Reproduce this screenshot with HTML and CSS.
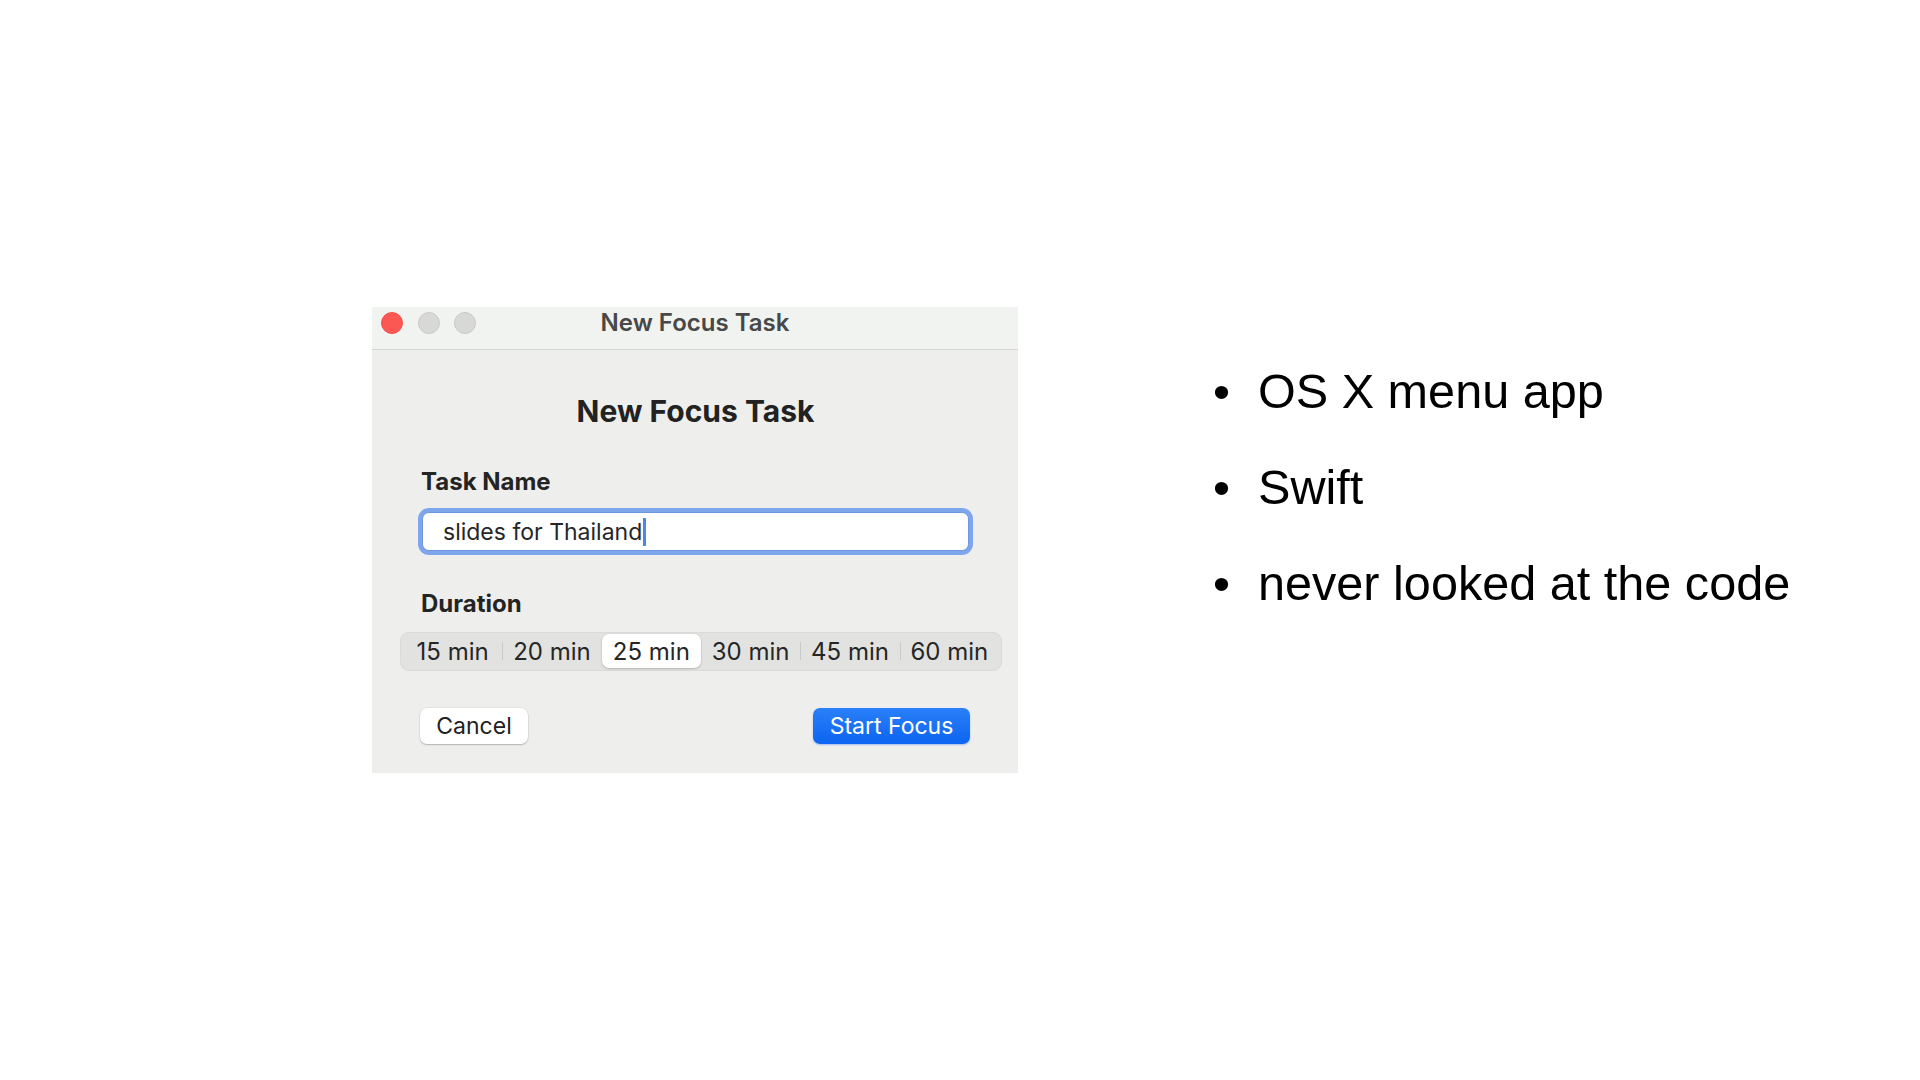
FILE: index.html
```html
<!DOCTYPE html>
<html lang="en">
<head>
<meta charset="utf-8">
<title>New Focus Task</title>
<link rel="stylesheet" href="styles.css">
</head>
<body>
<main class="slide">
  <section class="window">
    <header class="titlebar">
      <div class="lights">
        <span class="light red"></span>
        <span class="light"></span>
        <span class="light"></span>
      </div>
      <div class="title">New Focus Task</div>
      <div></div>
    </header>
    <div class="content">
      <h1 class="heading">New Focus Task</h1>
      <div class="label">Task Name</div>
      <div class="input-ring">
        <div class="input"><span class="input-text">slides for Thailand</span><span class="caret"></span></div>
      </div>
      <div class="label label-duration">Duration</div>
      <div class="segmented">
        <div class="seg">15 min</div>
        <div class="seg">20 min</div>
        <div class="seg selected">25 min</div>
        <div class="seg after-selected">30 min</div>
        <div class="seg">45 min</div>
        <div class="seg">60 min</div>
      </div>
      <div class="actions">
        <button class="btn">Cancel</button>
        <button class="btn primary">Start Focus</button>
      </div>
    </div>
  </section>
  <ul class="bullets">
    <li><span class="dot">•</span><span>OS X menu app</span></li>
    <li><span class="dot">•</span><span>Swift</span></li>
    <li><span class="dot">•</span><span>never looked at the code</span></li>
  </ul>
</main>
</body>
</html>
```

FILE: styles.css
```css
html, body {
  margin: 0;
  padding: 0;
  background: #ffffff;
}

.slide {
  width: 1920px;
  height: 1080px;
  box-sizing: border-box;
  display: flex;
  align-items: flex-start;
  padding: 307px 0 0 372px;
}

/* ---------- window ---------- */
.window {
  width: 646px;
  height: 466px;
  background: #eeefed;
  font-family: Inter, "Noto Sans", sans-serif;
  color: #242424;
  display: flex;
  flex-direction: column;
  flex-shrink: 0;
}

.titlebar {
  height: 43px;
  box-sizing: border-box;
  padding-top: 5px;
  background: #f1f3f0;
  border-bottom: 1px solid #d5d6d4;
  display: grid;
  grid-template-columns: 1fr auto 1fr;
  align-items: start;
}

.lights {
  display: flex;
  gap: 14.5px;
  padding-left: 9px;
}

.light {
  width: 22px;
  height: 22px;
  border-radius: 50%;
  box-sizing: border-box;
  background: #d8d9d7;
  border: 1px solid #c9cac8;
}

.light.red {
  background: #fc5853;
  border-color: #f24e4a;
}

.title {
  font-size: 24px;
  line-height: 22px;
  font-weight: 600;
  color: #474847;
}

.content {
  flex: 1;
  display: flex;
  flex-direction: column;
  padding: 43px 45px 0 46px;
}

.heading {
  margin: 0;
  font-size: 30px;
  line-height: 36px;
  font-weight: 700;
  text-align: center;
  color: #222;
}

.label {
  margin-top: 39px;
  padding-left: 3px;
  font-size: 24px;
  line-height: 28px;
  font-weight: 700;
  color: #242424;
}

.label-duration {
  margin-top: 35px;
}

.input-ring {
  margin-top: 12px;
  height: 47px;
  box-sizing: border-box;
  padding: 4px;
  border-radius: 11px;
  background: #7ea6ec;
}

.input {
  height: 100%;
  box-sizing: border-box;
  background: #ffffff;
  border-radius: 7px;
  border: 1px solid #6e97e2;
  padding-left: 20px;
  display: flex;
  align-items: center;
  font-size: 23px;
  color: #262626;
}

.caret {
  display: inline-block;
  width: 3px;
  height: 28px;
  background: #4f86e4;
  margin-left: 1px;
}

.segmented {
  margin: 14px -29px 0 -18px;
  height: 39px;
  box-sizing: border-box;
  padding: 1px 2px 2px;
  border-radius: 9px;
  background: #e2e3e1;
  border: 1px solid #dadbd9;
  display: flex;
}

.seg {
  flex: 1;
  position: relative;
  display: flex;
  align-items: center;
  justify-content: center;
  font-size: 24px;
  color: #262626;
  border-radius: 7px;
}

.seg + .seg::before {
  content: "";
  position: absolute;
  left: 0;
  top: 8px;
  bottom: 8px;
  width: 1px;
  background: #c9cac8;
}

.seg.selected {
  background: #ffffff;
  box-shadow: 0 1px 2px rgba(0, 0, 0, 0.18), 0 0 0 0.5px rgba(0, 0, 0, 0.06);
}

.seg.selected::before,
.seg.after-selected::before {
  display: none;
}

.actions {
  margin-top: 37px;
  display: flex;
  justify-content: space-between;
  padding: 0 3px 0 2px;
}

.btn {
  height: 36px;
  box-sizing: border-box;
  border-radius: 7px;
  font-family: Inter, "Noto Sans", sans-serif;
  font-size: 23px;
  padding: 0;
  border: none;
}

.btn:not(.primary) {
  width: 108px;
  background: #ffffff;
  color: #222;
  box-shadow: 0 1px 1.5px rgba(0, 0, 0, 0.22), 0 0 0 0.5px rgba(0, 0, 0, 0.08);
}

.btn.primary {
  width: 157px;
  color: #ffffff;
  background: linear-gradient(#2a80f8, #0c64f1);
  box-shadow: 0 1px 2px rgba(20, 90, 230, 0.35);
}

/* ---------- bullets ---------- */
.bullets {
  list-style: none;
  margin: 36px 0 0 195px;
  padding: 0;
  font-family: "Liberation Sans", Arial, sans-serif;
  font-size: 48.6px;
  line-height: 96px;
  color: #000;
}

.bullets li {
  display: flex;
  white-space: nowrap;
}

.dot {
  width: 45px;
  flex-shrink: 0;
}
```
